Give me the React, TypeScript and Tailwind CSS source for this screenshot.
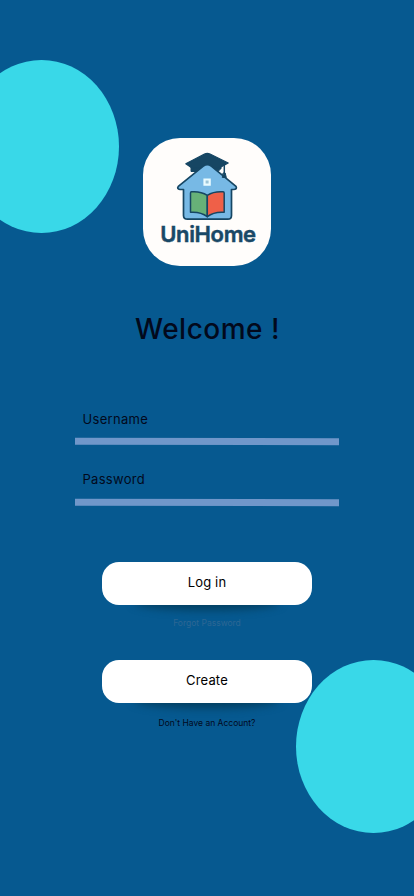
import React from "react";

function Logo() {
  return (
    <div className="flex h-32 w-32 flex-col items-center rounded-[37px] bg-[#fffdfb]">
      <svg className="mt-[13px] block h-[71px] w-[66px]" viewBox="174 151 66 71" fill="none" strokeLinejoin="round" strokeLinecap="round">
        <path d="M191 165V171.500H218L221 168.500V164.500Z" fill="#164663" stroke="#164663" />
        <path d="M185.800 163.800 204.500 154Q207.300 152.600 210 154L228.200 163 220 167.500 192 168Z" fill="#164663" stroke="#164663" strokeWidth="1.200" />
        <path d="M203.300 166.200Q207.300 162.800 211.300 166.200L236 186.400Q237.500 189.300 233.500 189.500H231.500V215.500Q231.500 219.200 227.800 219.200H187.700Q183.500 219.200 183.500 215.500V189.500H180Q176.500 188.800 178.300 186.400Z" fill="#77b9e5" stroke="#164663" strokeWidth="1.700" />
        <path d="M224.300 164.500V174" stroke="#164663" strokeWidth="1.500" />
        <path d="M223.400 173h1.800l1.100 4.500h-3.600z" fill="#164663" stroke="#164663" />
        <path d="M204.500 179.500h5.200v5.200h-5.200z" fill="#9bc5d8" stroke="#e8fbff" strokeWidth="2.200" strokeLinejoin="miter" />
        <path d="M207.300 195.300Q200.500 191 191.500 191.800Q190.500 191.900 190.500 193V212.300Q200.500 211.500 207.300 216.700Z" fill="#67b178" stroke="#164663" strokeWidth="1.500" />
        <path d="M207.300 195.300Q214 191.100 223 191.800Q224.200 191.900 224.200 193V212.300Q214 211.500 207.300 216.700Z" fill="#ef6048" stroke="#164663" strokeWidth="1.500" />
      </svg>
      <span className="mt-[-1px] ml-[2px] font-['Inter',sans-serif] text-[22px] leading-[26px] font-semibold tracking-[-0.350px] text-[#194866] [-webkit-text-stroke:0.500px_#194866]">
        UniHome
      </span>
    </div>
  );
}

function Field({ label }: { label: string }) {
  return (
    <label className="block h-[60.500px] w-[264px]">
      <span className="relative top-[-1px] block pl-[7.500px] font-['Inter',sans-serif] text-[13px] leading-5 tracking-[0.300px] text-[#02091c]">{label}</span>
      <span className="mt-[8.500px] block h-[6.500px] rotate-[0.110deg] bg-[#7097ca]" />
    </label>
  );
}

function ActionButton({ label }: { label: string }) {
  return (
    <button className="relative block h-[43px] w-[210px]">
      <span className="absolute inset-x-8 bottom-[-5px] h-4 rounded-[50%] bg-[#033f60] blur-[4px]" />
      <span className="relative flex h-full items-center justify-center rounded-[17px] bg-white pb-[2px] font-['Inter',sans-serif] text-[13px] tracking-[0.150px] text-black">
        {label}
      </span>
    </button>
  );
}

export default function App() {
  return (
    <main className="relative h-[896px] w-full overflow-hidden bg-[#065990]">
      <div className="absolute top-[59.500px] left-[-36px] h-[173.500px] w-[155px] rounded-[50%] bg-[#39d8e8]" />
      <div className="absolute top-[659.500px] left-[296px] h-[173.500px] w-[155px] rounded-[50%] bg-[#39d8e8]" />
      <div className="relative flex flex-col items-center pt-[138px]">
        <Logo />
        <h1 className="mt-[43px] h-10 pl-px font-['Inter',sans-serif] text-[28px] leading-10 font-medium tracking-[0.500px] whitespace-nowrap text-[#02091c]">
          Welcome !
        </h1>
        <form className="mt-[60.500px] flex flex-col items-center" onSubmit={(e) => e.preventDefault()}>
          <Field label="Username" />
          <Field label="Password" />
          <div className="mt-[31.500px]">
            <ActionButton label="Log in" />
          </div>
          <a className="mt-3 h-3 font-['Inter',sans-serif] text-[8.500px] leading-3 text-[#2d6794]">Forgot Password</a>
          <div className="mt-[31px]">
            <ActionButton label="Create" />
          </div>
          <a className="mt-[14px] h-3 font-['Inter',sans-serif] text-[8.500px] leading-3 text-[#02091c]">Don't Have an Account?</a>
        </form>
      </div>
    </main>
  );
}
